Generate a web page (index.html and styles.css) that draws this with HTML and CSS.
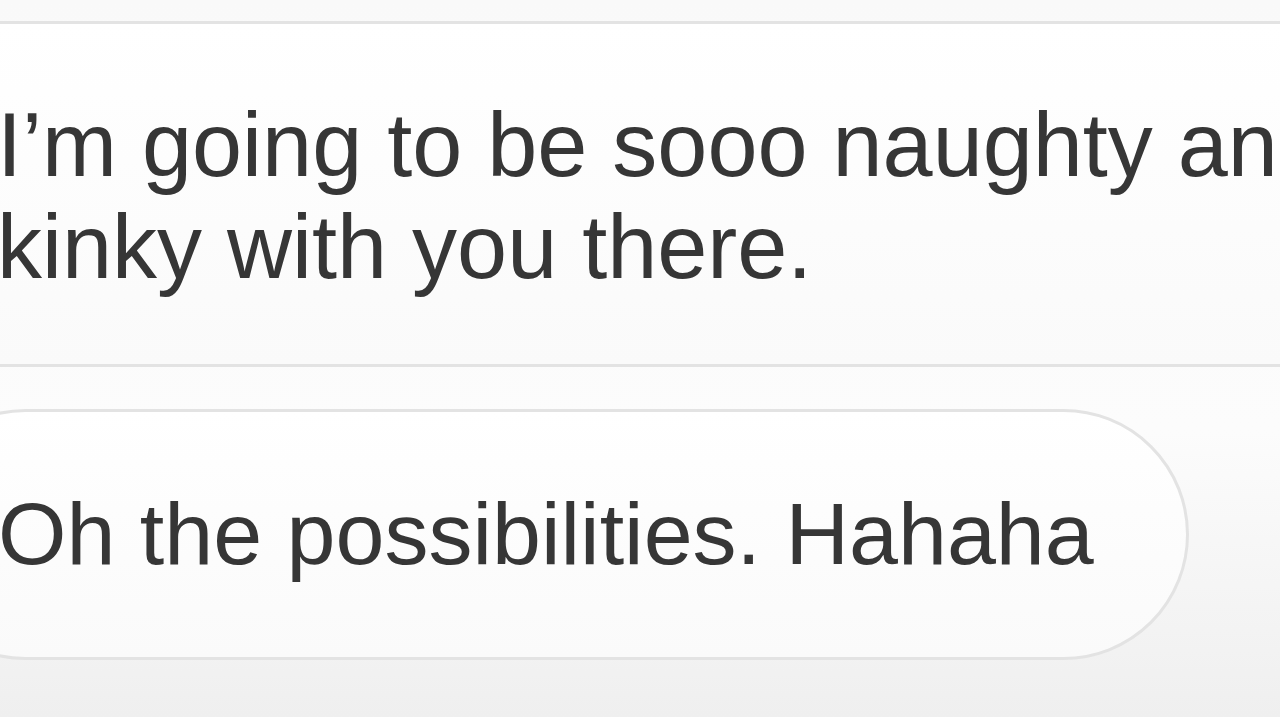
FILE: index.html
```html
<!DOCTYPE html>
<html lang="en">

<head>
    <meta charset="UTF-8">
    <title>Messages</title>
    <link rel="stylesheet" href="styles.css">
</head>

<body>

    <div class="thread">
        <div class="bubble wide">
            I’m going to be sooo naughty and kinky with you there.
        </div>
        <div class="bubble pill">
            Oh the possibilities. Hahaha
        </div>
    </div>

</body>

</html>
```

FILE: styles.css
```css
* {
    font-family: "Liberation Sans", Arial, sans-serif;
    box-sizing: border-box;
}

html,
body {
    height: 100%;
}

body {
    margin: 0;
    overflow: hidden;
    background: linear-gradient(#f9f9f9, #fcfcfc 60%, #efefef);
}

.thread {
    display: flex;
    flex-direction: column;
    align-items: flex-start;
    gap: 42px;
    padding-top: 21px;
    margin-left: -100px;
}

.bubble {
    color: #363636;
    font-size: 88px;
    line-height: 102px;
    border: 3px solid #e3e3e3;
    background: linear-gradient(#ffffff, #fafafa);
}

.wide {
    width: 1600px;
    font-size: 90px;
    padding: 70px 120px 66px 94px;
    border-radius: 60px;
}

.pill {
    padding: 71px 92px 72px 95px;
    border-radius: 130px;
}
```
